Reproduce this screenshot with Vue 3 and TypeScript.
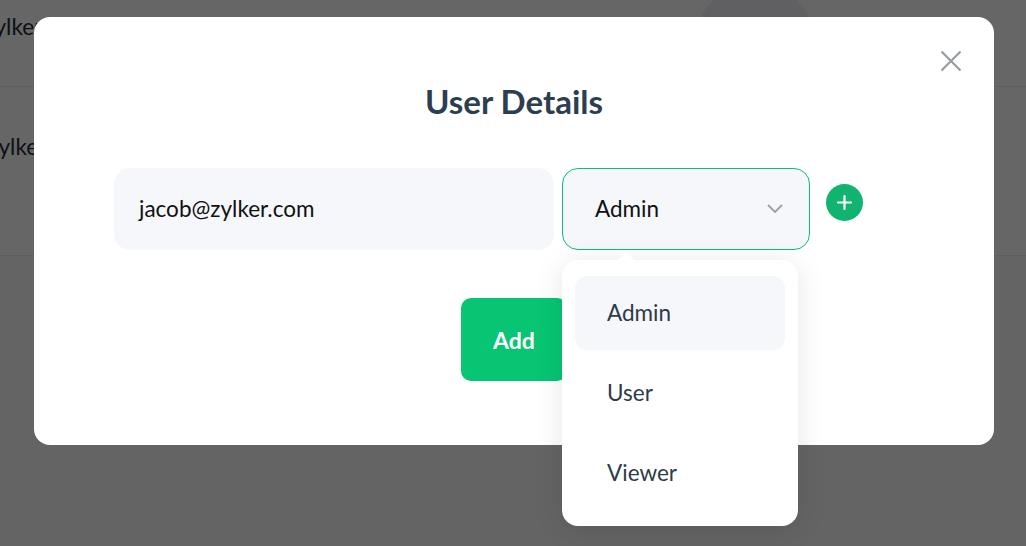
<script setup lang="ts">
const roles = ['Admin', 'User', 'Viewer']
const selected = 'Admin'
</script>

<template>
  <div class="page">
    <div class="row row-first">
      <span class="row-text">jacob@zylker.com</span>
      <span class="avatar"></span>
    </div>
    <div class="row row-second">
      <span class="row-text">jacob@zylker.com</span>
    </div>

    <div class="backdrop"></div>

    <div class="modal">
      <svg class="close" width="24" height="24" viewBox="0 0 24 24" fill="none">
        <path d="M2.5 2.5 21.5 21.5M21.5 2.5 2.5 21.5" stroke="#969ca1" stroke-width="2.2" />
      </svg>

      <h2 class="title">User Details</h2>

      <div class="form-row">
        <div class="field email">jacob@zylker.com</div>
        <div class="field select">
          <span>{{ selected }}</span>
          <svg class="chevron" width="16" height="9" viewBox="0 0 16 9" fill="none">
            <path d="M1 1 8 8 15 1" stroke="#9c9fa3" stroke-width="1.8" />
          </svg>
        </div>
        <button class="add-more">
          <svg width="17" height="17" viewBox="0 0 17 17" fill="none">
            <path d="M8.5 2v13M2 8.5h13" stroke="#fff" stroke-width="2.2" stroke-linecap="round" />
          </svg>
        </button>
      </div>

      <div class="actions">
        <button class="add">Add</button>
      </div>

      <div class="menu">
        <div v-for="role in roles" :key="role" class="menu-item" :class="{ active: role === selected }">
          {{ role }}
        </div>
      </div>
    </div>
  </div>
</template>

<style>
html,
body {
  margin: 0;
  overflow: hidden;
}
</style>

<style scoped>
.page {
  position: relative;
  width: 1026px;
  height: 546px;
  overflow: hidden;
  background: #fafafa;
  font-family: Lato, "Liberation Sans", sans-serif;
}

.row {
  display: flex;
  box-sizing: border-box;
  background: #fff;
  border-bottom: 1px solid #e9ebee;
  color: #1d2b3a;
  font-size: 22.5px;
  line-height: 26px;
}

.row-first {
  height: 87px;
  padding-top: 14px;
}

.row-second {
  height: 169px;
  padding-top: 47px;
}

.row-text {
  margin-left: -87px;
}

.row-second .row-text {
  margin-left: -83px;
}

.avatar {
  flex: none;
  width: 124px;
  height: 124px;
  margin: -30px 209px 0 auto;
  border-radius: 50%;
  background: #f0f1f4;
}

.backdrop {
  position: absolute;
  inset: 0;
  background: rgba(0, 0, 0, 0.6);
}

.modal {
  position: absolute;
  left: 34px;
  top: 17px;
  width: 960px;
  height: 428px;
  box-sizing: border-box;
  padding-top: 64px;
  border-radius: 16px;
  background: #fff;
}

.close {
  position: absolute;
  top: 32px;
  right: 31px;
}

.title {
  margin: 0;
  color: #2d3e50;
  font-size: 33px;
  font-weight: 700;
  line-height: 40px;
  text-align: center;
}

.form-row {
  display: flex;
  margin: 47px 0 0 80px;
}

.field {
  box-sizing: border-box;
  display: flex;
  align-items: center;
  height: 82px;
  padding-bottom: 2px;
  border-radius: 16px;
  background: #f5f7fb;
  color: #111;
  font-size: 22.5px;
}

.email {
  width: 440px;
  padding-left: 25px;
}

.select {
  justify-content: space-between;
  width: 248px;
  margin-left: 8px;
  padding: 0 26px 2px 32px;
  border: 1px solid #05c372;
}

.chevron {
  margin-top: 1px;
}

.add-more {
  display: flex;
  align-items: center;
  justify-content: center;
  width: 37px;
  height: 37px;
  margin: 16px 0 0 16px;
  padding: 0;
  border: 0;
  border-radius: 50%;
  background: #10b46e;
}

.actions {
  display: flex;
  justify-content: center;
  margin-top: 48px;
}

.add {
  width: 106px;
  height: 83px;
  padding: 0;
  border: 0;
  border-radius: 10px;
  background: #07c573;
  color: #fff;
  font-family: inherit;
  font-size: 23px;
  font-weight: 700;
}

.menu {
  position: absolute;
  left: 528px;
  top: 243px;
  box-sizing: border-box;
  width: 236px;
  height: 266px;
  padding: 16px 13px;
  border-radius: 16px;
  background: #fff;
  box-shadow: 0 4px 30px rgba(0, 0, 0, 0.1);
}

.menu::before {
  content: "";
  position: absolute;
  left: 56px;
  top: -8px;
  border: 8px solid transparent;
  border-top: 0;
  border-bottom-color: #fff;
}

.menu-item {
  display: flex;
  align-items: center;
  box-sizing: border-box;
  height: 74px;
  margin-bottom: 6px;
  padding: 0 0 2px 32px;
  border-radius: 12px;
  color: #2d3b4a;
  font-size: 22.5px;
}

.menu-item.active {
  background: #f5f7fb;
}
</style>
